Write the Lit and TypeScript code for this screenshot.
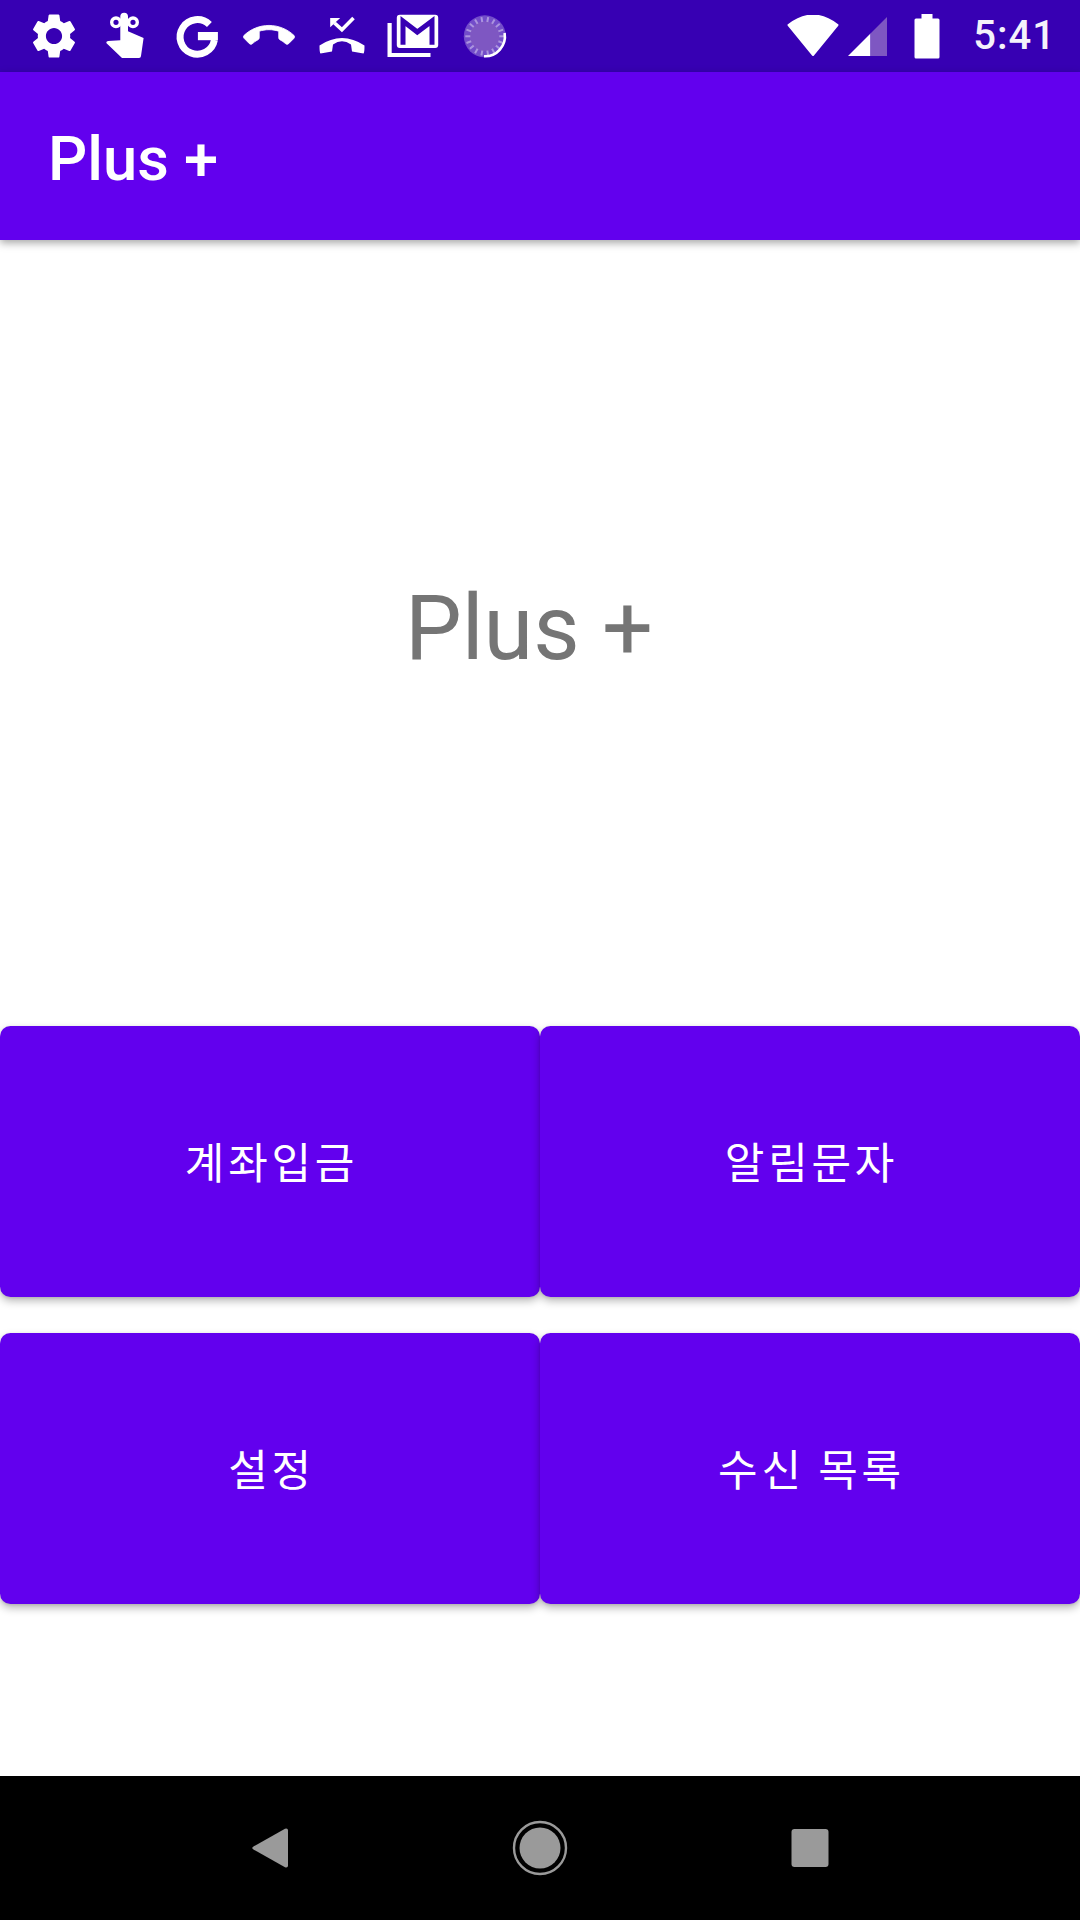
import { LitElement, html, css, svg } from 'lit';
import { customElement } from 'lit/decorators.js';

// material call_end for the status bar
const CALL_END =
  'M12 9c-1.6 0-3.15.25-4.6.72v3.1c0 .39-.23.74-.56.9-.98.49-1.87 1.12-2.66 1.85-.18.18-.43.28-.7.28-.28 0-.53-.11-.71-.29L.29 13.08c-.18-.17-.29-.42-.29-.7 0-.28.11-.53.29-.71C3.34 8.78 7.46 7 12 7s8.66 1.78 11.71 4.67c.18.18.29.43.29.71 0 .28-.11.53-.29.71l-2.48 2.48c-.18.18-.43.29-.71.29-.27 0-.52-.11-.7-.28-.79-.74-1.69-1.36-2.67-1.85-.33-.16-.56-.5-.56-.9v-3.1C15.15 9.25 13.6 9 12 9z';

const GEAR =
  'M19.14 12.94c.04-.3.06-.61.06-.94 0-.32-.02-.64-.07-.94l2.03-1.58c.18-.14.23-.41.12-.61l-1.92-3.32c-.12-.22-.37-.29-.59-.22l-2.39.96c-.5-.38-1.03-.7-1.62-.94l-.36-2.54c-.04-.24-.24-.41-.48-.41h-3.84c-.24 0-.43.17-.47.41l-.36 2.54c-.59.24-1.13.57-1.62.94l-2.39-.96c-.22-.08-.47 0-.59.22L2.74 8.87c-.12.21-.08.47.12.61l2.03 1.58c-.05.3-.09.63-.09.94s.02.64.07.94l-2.03 1.58c-.18.14-.23.41-.12.61l1.92 3.32c.12.22.37.29.59.22l2.39-.96c.5.38 1.03.7 1.62.94l.36 2.54c.05.24.24.41.48.41h3.84c.24 0 .44-.17.47-.41l.36-2.54c.59-.24 1.13-.56 1.62-.94l2.39.96c.22.08.47 0 .59-.22l1.92-3.32c.12-.22.07-.47-.12-.61l-2.01-1.58zM12 15.6c-1.98 0-3.6-1.62-3.6-3.6s1.62-3.6 3.6-3.6 3.6 1.62 3.6 3.6-1.62 3.6-3.6 3.6z';

// spinner ticks, angles in radians
const ticks = Array.from({ length: 18 }, (_, i) => (i * Math.PI * 2) / 18);

const notificationIcons = [
  svg`<g transform="translate(3 3) scale(2.25)"><path d=${GEAR} fill="#fff" fill-rule="evenodd" /></g>`,
  svg`<circle cx="20" cy="16.3" r="4.3" fill="none" stroke="#fff" stroke-width="3.4" />
    <circle cx="37" cy="16.3" r="4.3" fill="none" stroke="#fff" stroke-width="3.4" />
    <path fill="#fff" d="M24.3 10.6a3.85 3.85 0 0 1 7.7 0V25.3L47.6 32L45 50Q44.8 52 43 52H26L10.3 37Q10 35.5 12 35L24.3 34.3Z" />`,
  svg`<path d="M42.4 18.5A17.3 17.3 0 1 0 47.4 34" fill="none" stroke="#fff" stroke-width="7" />
    <rect x="30.9" y="26" width="20" height="8.2" fill="#fff" />`,
  svg`<g transform="translate(4.5 4.56) scale(2.125)"><path d=${CALL_END} fill="#fff" stroke="#fff" stroke-width="0.4" /></g>`,
  svg`<path fill="#fff" d="M8.5 39.5Q8.5 47 9.5 47.5L21 45.5L22 38.5Q31 32 40 38.5L41 45.5L52.5 47.5Q53.5 47 53.5 39.5Q31 24.5 8.5 39.5Z" />
    <path d="M42.5 12L30.9 23.7L23.5 17" fill="none" stroke="#fff" stroke-width="3.6" />
    <path d="M19.2 12H29.2L19.2 21.3Z" fill="#fff" />`,
  svg`<path d="M7.6 17V49H48.5" fill="none" stroke="#fff" stroke-width="4.2" />
    <rect x="14.8" y="8.7" width="41.4" height="33.3" rx="3" fill="#fff" />
    <path d="M21 38.7V15L35.3 26L50 15V38.7" fill="none" stroke="#3700b3" stroke-width="5" />`,
  svg`<circle cx="30.8" cy="30.3" r="21" fill="#fff" opacity="0.3" />
    <circle cx="30.8" cy="30.3" r="15" fill="#7e57c2" />
    ${ticks.map(
      (a) => svg`<line x1=${30.8 + Math.cos(a) * 14.5} y1=${30.3 + Math.sin(a) * 14.5}
        x2=${30.8 + Math.cos(a) * 19.5} y2=${30.3 + Math.sin(a) * 19.5}
        stroke="#fff" stroke-opacity="0.4" stroke-width="2" />`
    )}
    <path d="M50.6 27A20 20 0 0 1 30 50.3" fill="none" stroke="#fff" stroke-width="2.6" />`,
];

const buttons = ['계좌입금', '알림문자', '설정', '수신 목록'];

@customElement('app-root')
export class AppRoot extends LitElement {
  static styles = css`
    :host {
      display: flex;
      flex-direction: column;
      width: 1080px;
      height: 1920px;
      background: #fff;
      font-family: Roboto, 'Noto Sans CJK KR', sans-serif;
      overflow: hidden;
    }
    .status {
      display: flex;
      align-items: center;
      flex: 0 0 72px;
      background: #3700b3;
      color: #fff;
      padding: 0 24px 0 18px;
    }
    .slot {
      display: flex;
      justify-content: center;
      width: 71.7px;
    }
    .slot svg {
      width: 60px;
      height: 60px;
      display: block;
    }
    .sys {
      display: flex;
      align-items: center;
      margin-left: auto;
    }
    .wifi {
      width: 52px;
      height: 42px;
      margin-right: 8px;
    }
    .signal {
      width: 41px;
      height: 41px;
      margin-right: 26px;
    }
    .battery {
      width: 26px;
      height: 45px;
      margin-right: 33px;
    }
    .time {
      font-size: 40px;
      font-weight: 500;
      line-height: 72px;
      letter-spacing: 1px;
      opacity: 0.95;
    }
    .appbar {
      display: flex;
      align-items: center;
      flex: 0 0 168px;
      box-sizing: border-box;
      padding: 5px 0 0 48px;
      background: #6200ee;
      color: #fff;
      font-size: 61.5px;
      font-weight: 500;
      box-shadow: 0 3px 8px rgba(0, 0, 0, 0.35);
      z-index: 1;
    }
    .hero {
      flex: 1;
      display: flex;
      align-items: center;
      justify-content: center;
      padding: 0 22px 10px 0;
      font-size: 90px;
      color: #757575;
    }
    .grid {
      display: grid;
      grid-template-columns: 540px 540px;
      grid-auto-rows: 271px;
      row-gap: 36px;
      margin-bottom: 172px;
    }
    .btn {
      border: 0;
      margin: 0;
      padding: 0 0 4px 3px;
      background: #6200ee;
      color: #fff;
      border-radius: 10.5px;
      font-family: 'Noto Sans CJK KR', sans-serif;
      font-size: 43px;
      font-weight: 400;
      letter-spacing: 3.8px;
      box-shadow: 0 4px 8px rgba(0, 0, 0, 0.28), 0 1px 3px rgba(0, 0, 0, 0.1);
    }
    .nav {
      display: flex;
      justify-content: center;
      align-items: center;
      flex: 0 0 144px;
      background: #000;
    }
    .nav div {
      width: 270px;
      display: flex;
      justify-content: center;
    }
    .nav svg {
      width: 60px;
      height: 60px;
      display: block;
    }
  `;

  render() {
    return html`
      <div class="status">
        ${notificationIcons.map(
          (icon) => html`<div class="slot"><svg viewBox="0 0 60 60">${icon}</svg></div>`
        )}
        <div class="sys">
          <svg class="wifi" viewBox="0 0 52 42">
            <path d="M26 40L1.5 10Q26 -9 50.5 10Z" fill="#fff" stroke="#fff" stroke-width="2" stroke-linejoin="round" />
          </svg>
          <svg class="signal" viewBox="0 0 41 41">
            <path d="M1 40L23.5 17.5V40Z" fill="#fff" />
            <path d="M23.5 17.5L40 1V40H23.5Z" fill="#7e57c2" />
          </svg>
          <svg class="battery" viewBox="0 0 26 45">
            <path d="M7.5 0H18.5V4.5H24Q25.5 4.5 25.5 6V43Q25.5 44.5 24 44.5H2Q.5 44.5 .5 43V6Q.5 4.5 2 4.5H7.5Z" fill="#fff" />
          </svg>
          <span class="time">5:41</span>
        </div>
      </div>
      <div class="appbar">Plus +</div>
      <div class="hero">Plus +</div>
      <div class="grid">
        ${buttons.map((label) => html`<button class="btn">${label}</button>`)}
      </div>
      <div class="nav">
        <div>
          <svg viewBox="0 0 60 60">
            <path d="M13.5 28.5L45 10.8Q48 10 48 12.5V47.5Q48 50 45 49.2L13.5 31.5Q11 30 13.5 28.5Z" fill="#9a9a9a" />
          </svg>
        </div>
        <div>
          <svg viewBox="0 0 60 60">
            <circle cx="30" cy="30" r="26" fill="none" stroke="#9a9a9a" stroke-width="2.4" />
            <circle cx="30" cy="30" r="20.5" fill="#9a9a9a" />
          </svg>
        </div>
        <div>
          <svg viewBox="0 0 60 60">
            <rect x="11.5" y="11" width="37" height="38" rx="3" fill="#9a9a9a" />
          </svg>
        </div>
      </div>
    `;
  }
}
